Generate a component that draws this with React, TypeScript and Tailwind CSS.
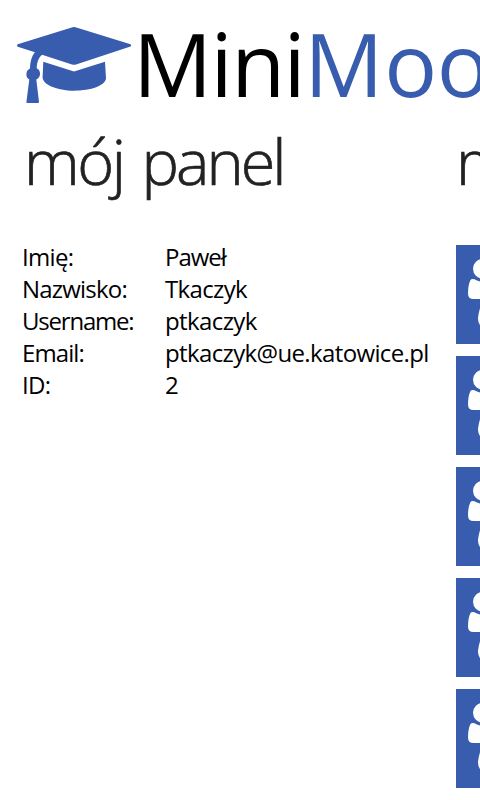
const details = [
  { label: "Imię:", value: "Paweł", ls: "tracking-[-0.7px]", vs: "tracking-[-1px]" },
  { label: "Nazwisko:", value: "Tkaczyk", ls: "tracking-[-0.8px]", vs: "tracking-[-0.65px]" },
  { label: "Username:", value: "ptkaczyk", ls: "tracking-[-1.2px]", vs: "tracking-[-0.6px]" },
  { label: "Email:", value: "ptkaczyk@ue.katowice.pl", ls: "tracking-[-0.9px]", vs: "tracking-[-0.63px]" },
  { label: "ID:", value: "2", ls: "tracking-[-0.7px]", vs: "tracking-[0px]" },
];

function CapLogo() {
  return (
    <svg className="h-[110px] w-[137px] shrink-0 fill-[#385dae]" viewBox="0 0 137 110" aria-hidden="true">
      <path d="M72.5 27.2Q74 26.7 75.5 27.2L130.5 44.2Q132 45.3 130.5 46.6L76 64.4Q74 65.2 72 64.4L42 54.8C38.5 58 37 62 36.7 68.3A6.3 6.3 0 0 1 36.3 79.6L39 102Q39 103 38 103H27.3Q26.3 103 26.4 102L29.3 79.6A6.3 6.3 0 0 1 30 68.6C30.3 61.5 31.5 56.500 35 52.300L17.700 46.800Q16.200 45.500 17.700 44.300Z" />
      <path d="M43.300 61.700L74 71.600L105 61.700L106 78.300C105.700 85.500 91 90.700 74 90.700C57 90.700 42.600 84.500 42.600 77.500Z" />
    </svg>
  );
}

function GroupTile() {
  return (
    <div className="h-[99px] w-[99px] shrink-0 bg-[#385dae]">
      <svg className="h-full w-full fill-white" viewBox="0 0 99 99" aria-hidden="true">
        <circle cx="27" cy="23.800" r="10" />
        <circle cx="72" cy="23.800" r="10" />
        <circle cx="49.500" cy="42" r="14" />
        <path d="M14.500 35Q15.700 33.300 18.500 34.300Q21 36 25 36.800Q31 38 33 40V54H17.500Q12 54 12 48.500Q12 40 14.500 35Z" />
        <path d="M84.500 35Q83.300 33.300 80.500 34.300Q78 36 74 36.800Q68 38 66 40V54H81.500Q87 54 87 48.500Q87 40 84.500 35Z" />
        <path d="M28 56Q23.500 60.500 22 73Q21.800 80 28 84H71Q77.200 80 77 73Q75.500 60.500 71 56Q50 72 28 56Z" />
      </svg>
    </div>
  );
}

export default function App() {
  return (
    <main className="h-[800px] w-[480px] overflow-hidden bg-white font-['Open_Sans','Noto_Sans',sans-serif] text-black">
      <header className="flex h-[120px] whitespace-nowrap">
        <CapLogo />
        <h1 className="-ml-[6px] pt-[3px] text-[88px] leading-[120px]">
          <span className="ml-[2px] tracking-[-1.6px]">Mini</span>
          <span className="tracking-[-0.5px] text-[#385dae]">
            <span className="tracking-[1px]">M</span>oodle
          </span>
        </h1>
      </header>
      <div className="flex">
        <section className="w-[456px] shrink-0 pl-[22px]">
          <h2 className="h-[121px] pl-[2px] text-[63px] font-light leading-[82px] tracking-[-2.4px] text-[#222] [-webkit-text-stroke:0.7px_#222] [word-spacing:4px]">
            mój <span className="tracking-[-3px]">panel</span>
          </h2>
          <dl className="text-2xl leading-8">
            {details.map((d) => (
              <div key={d.label} className="flex h-8 whitespace-nowrap">
                <dt className={`w-[143px] shrink-0 ${d.ls}`}>{d.label}</dt>
                <dd className={d.vs}>{d.value}</dd>
              </div>
            ))}
          </dl>
        </section>
        <section className="w-[400px] shrink-0">
          <h2 className="h-[125px] whitespace-nowrap text-[63px] font-light leading-[82px] tracking-[-2.4px] text-[#222] [-webkit-text-stroke:0.7px_#222]">moje kursy</h2>
          <div className="flex flex-col gap-3">
            {[1, 2, 3, 4, 5].map((n) => (
              <GroupTile key={n} />
            ))}
          </div>
        </section>
      </div>
    </main>
  );
}
